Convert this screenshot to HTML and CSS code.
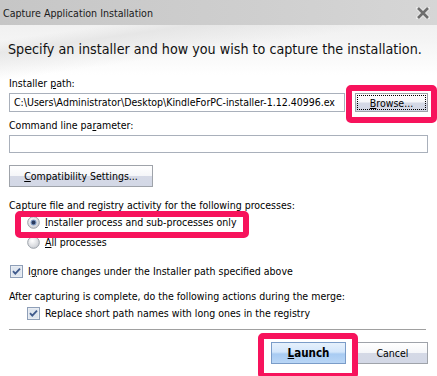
FILE: index.html
```html
<!DOCTYPE html>
<html>
<head>
<meta charset="utf-8">
<link rel="stylesheet" href="styles.css">
</head>
<body>
<div class="window">
  <div class="titlebar">
    <span class="title">Capture Application Installation</span>
    <svg class="close" width="14" height="12" viewBox="0 0 14 12">
      <path d="M2 1 L12 11 M12 1 L2 11" stroke="#e8e8e8" stroke-width="4.5" stroke-linecap="square"/>
      <path d="M2 1 L12 11 M12 1 L2 11" stroke="#6e6e6e" stroke-width="2.6"/>
    </svg>
  </div>
  <div class="content">
    <h1 class="heading">Specify an installer and how you wish to capture the installation.</h1>

    <div class="label lbl-path">Installer <u>p</u>ath:</div>
    <div class="path-row">
      <div class="textbox path-box">C:\Users\Administrator\Desktop\KindleForPC-installer-1.12.40996.ex</div>
      <div class="btn browse"><span class="focus"><u>B</u>rowse...</span></div>
    </div>

    <div class="label lbl-cmd">Command line pa<u>r</u>ameter:</div>
    <div class="textbox cmd-box"></div>

    <div class="btn compat"><u>C</u>ompatibility Settings...</div>

    <div class="label lbl-capture">Capture file and registry activity for the following processes:</div>
    <div class="option radio-1">
      <svg class="radio" width="13" height="13" viewBox="0 0 13 13">
        <defs><radialGradient id="rg" cx="0.4" cy="0.35" r="0.7"><stop offset="0" stop-color="#ffffff"/><stop offset="1" stop-color="#c9ccd2"/></radialGradient></defs>
        <circle cx="6.5" cy="6.5" r="5.8" fill="url(#rg)" stroke="#9aa0a8" stroke-width="1"/>
        <circle cx="6.5" cy="6.5" r="3" fill="#7f9bc4"/>
        <circle cx="6.5" cy="6.5" r="1.9" fill="#2a3b5e"/>
      </svg>
      <span><u>I</u>nstaller process and sub-processes only</span>
    </div>
    <div class="option radio-2">
      <svg class="radio" width="13" height="13" viewBox="0 0 13 13">
        <defs><radialGradient id="rg2" cx="0.4" cy="0.35" r="0.7"><stop offset="0" stop-color="#ffffff"/><stop offset="1" stop-color="#c9ccd2"/></radialGradient></defs>
        <circle cx="6.5" cy="6.5" r="5.8" fill="url(#rg2)" stroke="#9aa0a8" stroke-width="1"/>
      </svg>
      <span><u>A</u>ll processes</span>
    </div>

    <div class="option check-ignore">
      <svg class="check" width="13" height="13" viewBox="0 0 13 13">
        <rect x="0.5" y="0.5" width="12" height="12" fill="#e9edf3" stroke="#8e9fb8"/>
        <rect x="2" y="2" width="9" height="9" fill="#dfe6ef"/>
        <path d="M3 6.2 L5.3 8.6 L10 3.6" fill="none" stroke="#3f5a8c" stroke-width="1.8"/>
      </svg>
      <span>I<u>g</u>nore changes under the Installer path specified above</span>
    </div>

    <div class="label lbl-after">After capturing is complete, do the following actions during the merge:</div>
    <div class="option check-replace">
      <svg class="check" width="13" height="13" viewBox="0 0 13 13">
        <rect x="0.5" y="0.5" width="12" height="12" fill="#e9edf3" stroke="#8e9fb8"/>
        <rect x="2" y="2" width="9" height="9" fill="#dfe6ef"/>
        <path d="M3 6.2 L5.3 8.6 L10 3.6" fill="none" stroke="#3f5a8c" stroke-width="1.8"/>
      </svg>
      <span>Replace short path names with long ones in the registry</span>
    </div>

    <div class="separator"></div>

    <div class="actions">
      <div class="btn launch"><u>L</u>aunch</div>
      <div class="btn cancel">Cancel</div>
    </div>
  </div>

  <div class="highlight hl-browse"></div>
  <div class="highlight hl-radio"></div>
  <div class="highlight hl-launch"></div>
</div>
</body>
</html>
```

FILE: styles.css
```css
html, body {
  margin: 0;
  padding: 0;
}
body {
  width: 437px;
  height: 376px;
  overflow: hidden;
  background: #ffffff;
  font-family: "DejaVu Sans Condensed", "DejaVu Sans", sans-serif;
  font-size: 10.5px;
  color: #000;
}
.window {
  position: relative;
  width: 437px;
  height: 376px;
  background:
    linear-gradient(172deg, rgba(255,255,255,0) 0px, rgba(255,255,255,0) 40px, rgba(225,225,225,0.7) 52px, rgba(255,255,255,0) 80px),
    linear-gradient(180deg, #ebebeb 0px, #f4f4f4 40px, #ffffff 75px, #ffffff 100%);
}
.titlebar {
  height: 25px;
  display: flex;
  align-items: center;
  justify-content: space-between;
  padding: 0 7px 0 3px;
  background: linear-gradient(90deg, #c6c6c6 0%, #cfcfcf 60%, #d6d6d6 100%);
  color: #1a1a1a;
  font-size: 10.6px;
}
.close {
  display: block;
}
.content {
  padding: 0 9px;
}
.heading {
  margin: 15px 0 0 -1px;
  font-weight: normal;
  font-size: 14.2px;
  line-height: 18px;
  color: #111;
  white-space: nowrap;
}
.label {
  line-height: 14px;
  white-space: nowrap;
}
.lbl-path {
  margin-top: 18px;
}
.path-row {
  display: flex;
  align-items: center;
  margin-top: 3px;
}
.textbox {
  box-sizing: border-box;
  border: 1px solid #a9b0bb;
  background: #fff;
  white-space: nowrap;
  overflow: hidden;
}
.path-box {
  width: 336px;
  height: 19px;
  line-height: 17px;
  padding-left: 4px;
}
.btn {
  box-sizing: border-box;
  border: 1px solid #9fa3aa;
  background: linear-gradient(180deg, #ffffff 0%, #f5f6f9 48%, #d5d9e6 52%, #d3d8e6 100%);
  display: flex;
  align-items: center;
  justify-content: center;
  white-space: nowrap;
}
.browse {
  margin-left: 10px;
  width: 73px;
  height: 19px;
  padding: 1px;
}
.browse .focus {
  flex: 1;
  align-self: stretch;
  border: 1px dotted #000;
  display: flex;
  align-items: center;
  justify-content: center;
}
.lbl-cmd {
  margin-top: 6px;
}
.cmd-box {
  margin-top: 3px;
  width: 419px;
  height: 18px;
}
.compat {
  margin-top: 12px;
  width: 144px;
  height: 22px;
}
.lbl-capture {
  margin-top: 11px;
}
.option {
  display: flex;
  align-items: center;
  gap: 5px;
  height: 18px;
  white-space: nowrap;
}
.radio, .check {
  flex: none;
  display: block;
}
.radio-1 {
  margin-top: 1px;
  padding-left: 18px;
}
.radio-2 {
  margin-top: 2px;
  padding-left: 18px;
}
.check-ignore {
  margin-top: 11px;
  padding-left: 1px;
}
.lbl-after {
  margin-top: 9px;
}
.check-replace {
  margin-top: 1px;
  padding-left: 18px;
}
.separator {
  margin-top: 7px;
  height: 1px;
  width: 417px;
  background: #a0a0a0;
}
.actions {
  display: flex;
  justify-content: flex-end;
  gap: 11px;
  margin-top: 12px;
}
.launch {
  width: 75px;
  height: 22px;
  font-weight: bold;
  font-size: 11.5px;
  border-color: #7a9cc8;
  background: linear-gradient(180deg, #e6f1fc 0%, #d3e6fb 45%, #a8cbf2 55%, #b9d6f6 100%);
}
.cancel {
  width: 71px;
  height: 22px;
}
.highlight {
  position: absolute;
  box-sizing: border-box;
  border: 6px solid #f7135c;
  border-radius: 5px;
}
.hl-browse {
  left: 346px;
  top: 85px;
  width: 91px;
  height: 38px;
}
.hl-radio {
  left: 15px;
  top: 211px;
  width: 234px;
  height: 27px;
}
.hl-launch {
  left: 258px;
  top: 333px;
  width: 100px;
  height: 46px;
}
```
